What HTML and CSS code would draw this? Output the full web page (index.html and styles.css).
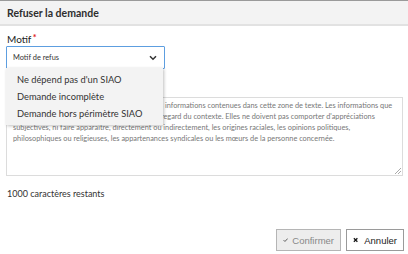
FILE: index.html
```html
<!DOCTYPE html>
<html lang="fr">
<head>
<meta charset="utf-8">
<link rel="stylesheet" href="styles.css">
</head>
<body>
<div class="modal">
  <div class="modal-header"><h1 class="title">Refuser la demande</h1></div>
  <div class="modal-body">
    <label class="label">Motif <span class="req">*</span></label>
    <div class="select-wrap">
      <div class="select">
        <span>Motif de refus</span>
        <svg class="chev" width="8" height="6" viewBox="0 0 8 6"><path d="M1 1.3l3 3 3-3" fill="none" stroke="#333" stroke-width="1.5"/></svg>
      </div>
      <ul class="menu">
        <li>Ne dépend pas d'un SIAO</li>
        <li>Demande incomplète</li>
        <li>Demande hors périmètre SIAO</li>
      </ul>
    </div>
    <label class="label label-comment">Commentaire</label>
    <div class="textarea">Nous rappelons que vous êtes responsable des informations contenues dans cette zone de texte. Les informations que vous y renseignez doivent être pertinentes au regard du contexte. Elles ne doivent pas comporter d'appréciations subjectives, ni faire apparaître, directement ou indirectement, les origines raciales, les opinions politiques, philosophiques ou religieuses, les appartenances syndicales ou les mœurs de la personne concernée.<span class="grip"></span></div>
    <p class="counter">1000 caractères restants</p>
  </div>
  <div class="modal-footer">
    <button class="btn btn-confirm"><svg width="9" height="8" viewBox="0 0 9 8"><path d="M1 4.2l2.3 2.3L8 1.5" fill="none" stroke="#555" stroke-width="1.6"/></svg>Confirmer</button>
    <button class="btn btn-cancel"><svg width="8" height="8" viewBox="0 0 8 8"><path d="M1.3 1.3l5.4 5.4M6.7 1.3L1.3 6.7" fill="none" stroke="#111" stroke-width="1.9"/></svg>Annuler</button>
  </div>
</div>
</body>
</html>
```
FILE: styles.css
```css
* { box-sizing: border-box; }
html, body { margin: 0; padding: 0; background: #fff; }
body {
  font-family: Lato, "Open Sans", sans-serif;
  color: #2a2a2a;
  width: 408px;
  height: 254px;
  overflow: hidden;
}
.modal { display: flex; flex-direction: column; height: 254px; }
.modal-header {
  border-top: 1px solid #9a9a9a;
  background: #f3f3f3;
  border-bottom: 2px solid #e2e2e2;
  height: 26px;
  padding: 0 7px;
  display: flex;
  align-items: center;
}
.title {
  margin: 0;
  font-size: 10.5px;
  font-weight: 700;
  color: #2e2e2e;
}
.modal-body {
  padding: 0 5px 0 6px;
  display: flex;
  flex-direction: column;
}
.label {
  display: block;
  font-size: 10px;
  color: #222;
  margin: 5px 0 0 1px;
  line-height: 14px;
}
.req { color: #e02020; font-size: 9px; font-weight: 700; vertical-align: 2px; margin-left: -1px; }
.select-wrap { position: relative; }
.select {
  width: 159px;
  height: 23px;
  border: 1px solid #5d9ee0;
  border-radius: 1px;
  display: flex;
  align-items: center;
  justify-content: space-between;
  padding: 0 7px 0 6px;
  font-size: 7.4px;
  color: #333;
}
.chev { display: block; }
.menu {
  position: absolute;
  top: 22px;
  left: 0;
  width: 157px;
  margin: 0;
  padding: 3px 0;
  list-style: none;
  background: #f3f3f3;
  box-shadow: 1px 1px 3px rgba(0,0,0,0.25);
  z-index: 5;
}
.menu li {
  height: 17px;
  line-height: 17px;
  padding-left: 11px;
  font-size: 9.3px;
  color: #333;
}
.label-comment { margin-top: 14px; font-size: 9px; }
.textarea {
  position: relative;
  height: 79px;
  border: 1px solid #dcdcdc;
  padding: 2px 8px 2px 6px;
  font-size: 7.35px;
  line-height: 11px;
  color: #777;
}
.grip {
  position: absolute;
  right: 1px;
  bottom: 1px;
  width: 6px;
  height: 6px;
  background: linear-gradient(135deg, transparent 45%, #aaa 45%, #aaa 55%, transparent 55%, transparent 70%, #aaa 70%, #aaa 80%, transparent 80%);
}
.counter {
  margin: 12px 0 0 1px;
  font-size: 9px;
  color: #333;
}
.modal-footer {
  margin-top: auto;
  display: flex;
  justify-content: flex-end;
  gap: 5px;
  padding: 0 4px 3px 0;
}
.btn {
  height: 22px;
  display: flex;
  align-items: center;
  gap: 4px;
  font-family: "Liberation Sans", Arial, sans-serif;
  font-size: 9.5px;
  border-radius: 0;
  padding: 0 6px;
}
.btn-confirm {
  width: 65px;
  background: #ededed;
  border: 1px solid #b5b5b5;
  color: #888;
}
.btn-cancel {
  width: 58px;
  background: #fff;
  border: 1px solid #9a9a9a;
  color: #222;
  gap: 6px;
}
```
